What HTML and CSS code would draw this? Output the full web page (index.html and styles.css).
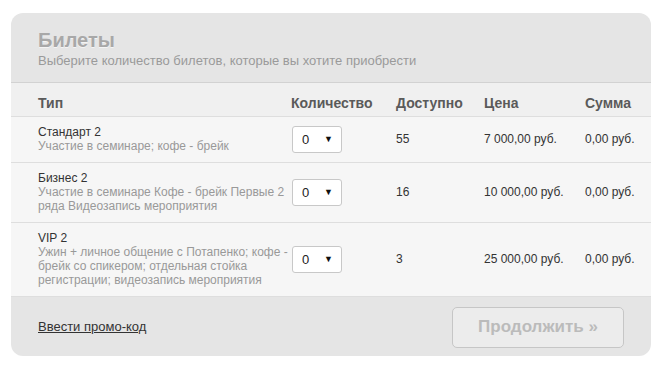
FILE: index.html
```html
<!DOCTYPE html>
<html lang="ru">
<head>
    <meta charset="UTF-8">
    <meta name="viewport" content="width=device-width, initial-scale=1.0">
    <title>Билеты</title>
    <link rel="stylesheet" href="styles.css">
</head>
<body>
    <div class="card">
        <div class="card-head">
            <h1>Билеты</h1>
            <p class="subtitle">Выберите количество билетов, которые вы хотите приобрести</p>
        </div>

        <div class="row row-head">
            <div>Тип</div>
            <div>Количество</div>
            <div>Доступно</div>
            <div>Цена</div>
            <div>Сумма</div>
        </div>

        <div class="row">
            <div class="ticket">
                <div class="ticket-name">Стандарт 2</div>
                <div class="ticket-desc">Участие в семинаре; кофе - брейк</div>
            </div>
            <div class="qty">
                <select class="select"><option>0</option><option>1</option><option>2</option></select>
                <span class="arrow">▼</span>
            </div>
            <div>55</div>
            <div>7 000,00 руб.</div>
            <div>0,00 руб.</div>
        </div>

        <div class="row">
            <div class="ticket">
                <div class="ticket-name">Бизнес 2</div>
                <div class="ticket-desc">Участие в семинаре Кофе - брейк Первые 2 ряда Видеозапись мероприятия</div>
            </div>
            <div class="qty">
                <select class="select"><option>0</option><option>1</option><option>2</option></select>
                <span class="arrow">▼</span>
            </div>
            <div>16</div>
            <div>10 000,00 руб.</div>
            <div>0,00 руб.</div>
        </div>

        <div class="row">
            <div class="ticket">
                <div class="ticket-name">VIP 2</div>
                <div class="ticket-desc">Ужин + личное общение с Потапенко; кофе - брейк со спикером; отдельная стойка регистрации; видеозапись мероприятия</div>
            </div>
            <div class="qty">
                <select class="select"><option>0</option><option>1</option><option>2</option></select>
                <span class="arrow">▼</span>
            </div>
            <div>3</div>
            <div>25 000,00 руб.</div>
            <div>0,00 руб.</div>
        </div>

        <div class="card-foot">
            <a href="#" class="promo">Ввести промо-код</a>
            <button class="next" disabled>Продолжить »</button>
        </div>
    </div>
</body>
</html>
```

FILE: styles.css
```css
body {
    margin: 0;
    padding: 13px 10px 8px 11px;
    background: #fff;
    font-family: "Liberation Sans", Arial, sans-serif;
    color: #333;
}

.card {
    width: 640px;
    border-radius: 12px;
    overflow: hidden;
    background-color: #e5e5e5;
}

.card-head {
    box-sizing: border-box;
    height: 70px;
    padding: 16px 27px 0;
    border-bottom: 1px solid #d2d2d2;
}

h1 {
    margin: 0;
    font-size: 20px;
    line-height: 23px;
    font-weight: bold;
    color: #a8a8a8;
    text-shadow: 0 1px 0 #f4f4f4;
}

.subtitle {
    margin: 1px 0 0;
    font-size: 13px;
    line-height: 16px;
    color: #9a9a9a;
}

.row {
    display: grid;
    grid-template-columns: 253px 105px 88px 101px 1fr;
    align-items: center;
    padding: 8px 10px 9px 27px;
    border-bottom: 1px solid #dedede;
    background-color: #f6f6f6;
    font-size: 12px;
    line-height: 14px;
}

.row-head {
    padding-top: 12px;
    padding-bottom: 5px;
    line-height: 16px;
    background-color: #f0f0f0;
    font-size: 14px;
    font-weight: bold;
    color: #5a5a5a;
}

.ticket-name {
    color: #333;
}

.ticket-desc {
    color: #999;
}

.qty {
    position: relative;
    width: 50px;
    height: 27px;
    margin-left: 1px;
}

.select {
    appearance: none;
    -webkit-appearance: none;
    box-sizing: border-box;
    width: 50px;
    height: 27px;
    padding: 0 0 0 9px;
    border: 1px solid #c8c8c8;
    border-radius: 3px;
    background-color: #fff;
    font-family: inherit;
    font-size: 13px;
    color: #222;
}

.arrow {
    position: absolute;
    top: 7px;
    right: 9px;
    font-size: 9px;
    line-height: 12px;
    color: #111;
    pointer-events: none;
}

.card-foot {
    display: flex;
    justify-content: space-between;
    align-items: center;
    height: 59px;
    padding: 0 27px;
}

.promo {
    font-size: 13px;
    color: #333;
    text-decoration: underline;
}

.next {
    width: 172px;
    height: 41px;
    margin-top: 1px;
    border: 1px solid #c6c6c6;
    border-radius: 5px;
    background-color: #ececec;
    font-family: inherit;
    font-size: 17px;
    font-weight: bold;
    color: #bbb;
}
```
